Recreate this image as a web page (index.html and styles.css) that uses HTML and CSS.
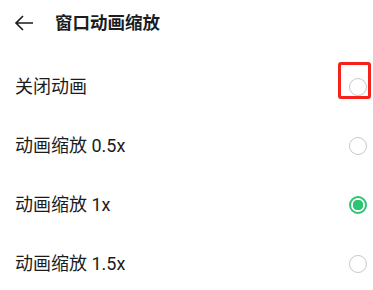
FILE: index.html
```html
<!DOCTYPE html>
<html lang="zh-CN">
<head>
<meta charset="utf-8">
<link rel="stylesheet" href="styles.css">
</head>
<body>
<div class="screen">
  <header class="header">
    <svg class="back" width="20" height="16" viewBox="0 0 20 16">
      <path d="M19 8H2M9 1L2 8l7 7" fill="none" stroke="#1a1a1a" stroke-width="1.6"/>
    </svg>
    <h1 class="title">窗口动画缩放</h1>
  </header>
  <ul class="list">
    <li class="row"><span class="label">关闭动画</span><span class="radio marked"><span class="mark"></span></span></li>
    <li class="row"><span class="label">动画缩放 0.5x</span><span class="radio"></span></li>
    <li class="row"><span class="label">动画缩放 1x</span><span class="radio checked"></span></li>
    <li class="row"><span class="label">动画缩放 1.5x</span><span class="radio"></span></li>
  </ul>
</div>
</body>
</html>
```
FILE: styles.css
```css
html, body {
  margin: 0;
  padding: 0;
  background: #ffffff;
}
body {
  font-family: Roboto, "Noto Sans CJK SC", sans-serif;
  color: #1c1c1c;
}
.screen {
  width: 373px;
  height: 290px;
  overflow: hidden;
}
.header {
  height: 45px;
  display: flex;
  align-items: center;
  padding-left: 14px;
}
.back {
  display: block;
}
.title {
  margin: 0 0 0 21px;
  font-size: 17.5px;
  font-weight: 700;
  line-height: 20px;
}
.list {
  list-style: none;
  margin: 0;
  padding: 12px 0 0 0;
}
.row {
  height: 59px;
  display: flex;
  align-items: center;
  justify-content: space-between;
  padding: 0 6px 0 15px;
}
.label {
  font-size: 18px;
  line-height: 20px;
}
.radio {
  position: relative;
  width: 18px;
  height: 18px;
  box-sizing: border-box;
  border: 1.5px solid #c8c8c8;
  border-radius: 50%;
}
.radio.checked {
  border: 2px solid #2dc473;
  background: radial-gradient(circle, #2dc473 0 5px, #ffffff 5.5px);
}
.mark {
  position: absolute;
  left: -12px;
  top: -17px;
  width: 33px;
  height: 37px;
  box-sizing: border-box;
  border: 3px solid #f5221b;
  border-radius: 3px;
}
```
